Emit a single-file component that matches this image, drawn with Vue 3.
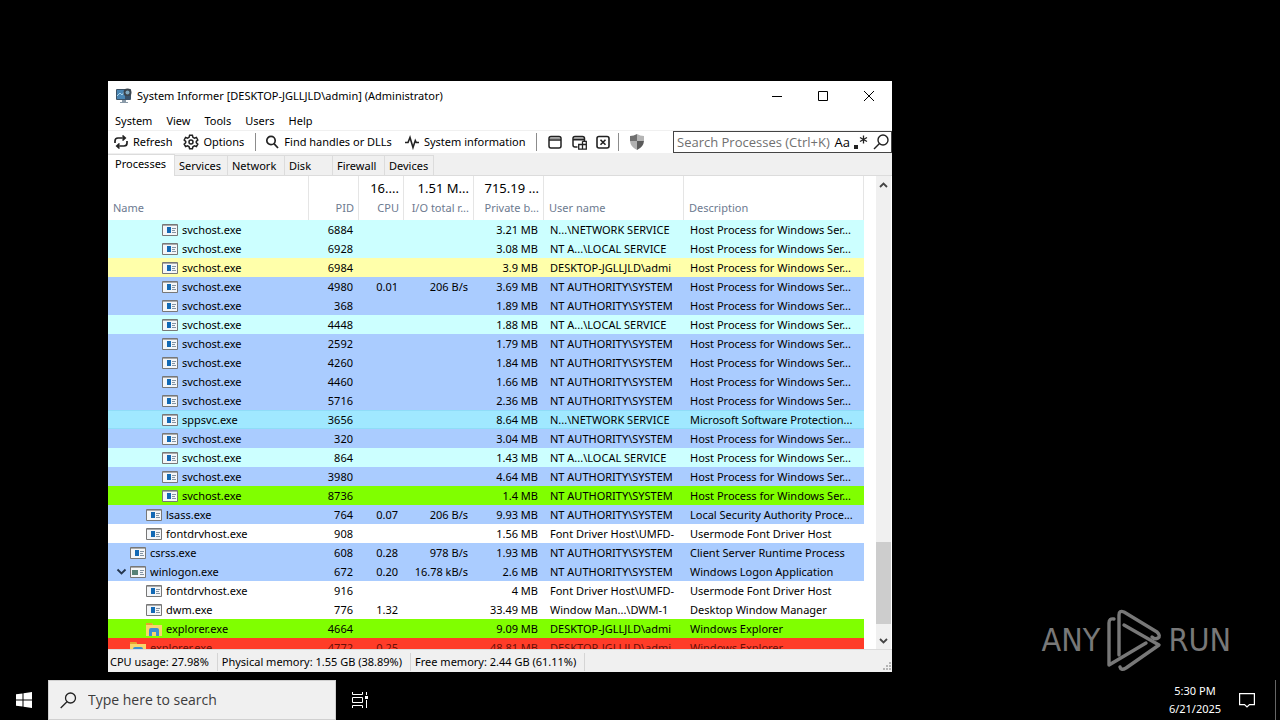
<script setup>
import { ref } from 'vue'

const menus = ['System', 'View', 'Tools', 'Users', 'Help']
const tabs = [
  { name: 'Processes', width: 67 },
  { name: 'Services', width: 53 },
  { name: 'Network', width: 57 },
  { name: 'Disk', width: 48 },
  { name: 'Firewall', width: 52 },
  { name: 'Devices', width: 49 }
]
const activeTab = ref('Processes')
const filter = ref('')
const taskSearch = ref('')

const columns = [
  { key: 'name', label: 'Name', total: '' },
  { key: 'pid', label: 'PID', total: '' },
  { key: 'cpu', label: 'CPU', total: '16....' },
  { key: 'io', label: 'I/O total r...', total: '1.51 M...' },
  { key: 'bytes', label: 'Private b...', total: '715.19 ...' },
  { key: 'user', label: 'User name', total: '' },
  { key: 'desc', label: 'Description', total: '' }
]

const HOST = 'Host Process for Windows Ser...'
const SYSTEM = 'NT AUTHORITY\\SYSTEM'
const LOCAL = 'NT A...\\LOCAL SERVICE'
const NETWORK = 'N...\\NETWORK SERVICE'
const ADMIN = 'DESKTOP-JGLLJLD\\admi'
const UMFD = 'Font Driver Host\\UMFD-'

const processes = [
  { level: 3, name: 'svchost.exe', pid: 6884, bytes: '3.21 MB', user: NETWORK, desc: HOST, kind: 'service' },
  { level: 3, name: 'svchost.exe', pid: 6928, bytes: '3.08 MB', user: LOCAL, desc: HOST, kind: 'service' },
  { level: 3, name: 'svchost.exe', pid: 6984, bytes: '3.9 MB', user: ADMIN, desc: HOST, kind: 'own' },
  { level: 3, name: 'svchost.exe', pid: 4980, cpu: '0.01', io: '206 B/s', bytes: '3.69 MB', user: SYSTEM, desc: HOST, kind: 'system' },
  { level: 3, name: 'svchost.exe', pid: 368, bytes: '1.89 MB', user: SYSTEM, desc: HOST, kind: 'system' },
  { level: 3, name: 'svchost.exe', pid: 4448, bytes: '1.88 MB', user: LOCAL, desc: HOST, kind: 'service' },
  { level: 3, name: 'svchost.exe', pid: 2592, bytes: '1.79 MB', user: SYSTEM, desc: HOST, kind: 'system' },
  { level: 3, name: 'svchost.exe', pid: 4260, bytes: '1.84 MB', user: SYSTEM, desc: HOST, kind: 'system' },
  { level: 3, name: 'svchost.exe', pid: 4460, bytes: '1.66 MB', user: SYSTEM, desc: HOST, kind: 'system' },
  { level: 3, name: 'svchost.exe', pid: 5716, bytes: '2.36 MB', user: SYSTEM, desc: HOST, kind: 'system' },
  { level: 3, name: 'sppsvc.exe', pid: 3656, bytes: '8.64 MB', user: NETWORK, desc: 'Microsoft Software Protection...', kind: 'hovered' },
  { level: 3, name: 'svchost.exe', pid: 320, bytes: '3.04 MB', user: SYSTEM, desc: HOST, kind: 'system' },
  { level: 3, name: 'svchost.exe', pid: 864, bytes: '1.43 MB', user: LOCAL, desc: HOST, kind: 'service' },
  { level: 3, name: 'svchost.exe', pid: 3980, bytes: '4.64 MB', user: SYSTEM, desc: HOST, kind: 'system' },
  { level: 3, name: 'svchost.exe', pid: 8736, bytes: '1.4 MB', user: SYSTEM, desc: HOST, kind: 'started' },
  { level: 2, name: 'lsass.exe', pid: 764, cpu: '0.07', io: '206 B/s', bytes: '9.93 MB', user: SYSTEM, desc: 'Local Security Authority Proce...', kind: 'system' },
  { level: 2, name: 'fontdrvhost.exe', pid: 908, bytes: '1.56 MB', user: UMFD, desc: 'Usermode Font Driver Host' },
  { level: 1, name: 'csrss.exe', pid: 608, cpu: '0.28', io: '978 B/s', bytes: '1.93 MB', user: SYSTEM, desc: 'Client Server Runtime Process', kind: 'system' },
  { level: 1, name: 'winlogon.exe', pid: 672, cpu: '0.20', io: '16.78 kB/s', bytes: '2.6 MB', user: SYSTEM, desc: 'Windows Logon Application', kind: 'system', icon: 'logon', open: true },
  { level: 2, name: 'fontdrvhost.exe', pid: 916, bytes: '4 MB', user: UMFD, desc: 'Usermode Font Driver Host' },
  { level: 2, name: 'dwm.exe', pid: 776, cpu: '1.32', bytes: '33.49 MB', user: 'Window Man...\\DWM-1', desc: 'Desktop Window Manager' },
  { level: 2, name: 'explorer.exe', pid: 4664, bytes: '9.09 MB', user: ADMIN, desc: 'Windows Explorer', kind: 'started', icon: 'folder' },
  { level: 1, name: 'explorer.exe', pid: 4772, cpu: '0.25', bytes: '48.81 MB', user: ADMIN, desc: 'Windows Explorer', kind: 'ended', icon: 'folder' }
]

const status = ['CPU usage: 27.98%', 'Physical memory: 1.55 GB (38.89%)', 'Free memory: 2.44 GB (61.11%)']
</script>

<template>
  <div class="desktop">
    <main class="workspace">
      <section class="window">
        <header class="titlebar">
          <svg class="app-icon" width="18" height="16" viewBox="0 0 18 16">
            <rect x="1" y="1" width="15" height="11" rx="1" fill="#3c5266" />
            <rect x="2" y="2" width="13" height="9" fill="#4a86b4" />
            <path d="M2 8l3-3 2 2 3-4" stroke="#a9d4ee" fill="none" />
            <circle cx="12.500" cy="4.500" r="4" fill="#3b444d" />
            <circle cx="12.500" cy="4.500" r="2" fill="#7fa7bf" />
            <path d="M7 12h4v2h2v1H5v-1h2z" fill="#8a9aa8" />
            <path d="M10 8h5v4h-5z" fill="#38516a" />
          </svg>
          <h1>System Informer [DESKTOP-JGLLJLD\admin] (Administrator)</h1>
          <button class="caption" aria-label="Minimize">
            <svg width="12" height="12"><path d="M1 6.500h10" stroke="#000" /></svg>
          </button>
          <button class="caption" aria-label="Maximize">
            <svg width="12" height="12"><path d="M1.500 1.500h9v9h-9z" stroke="#000" fill="none" /></svg>
          </button>
          <button class="caption" aria-label="Close">
            <svg width="12" height="12"><path d="M1 1l10 10M11 1L1 11" stroke="#000" /></svg>
          </button>
        </header>

        <nav class="menubar">
          <button v-for="m in menus" :key="m">{{ m }}</button>
        </nav>

        <div class="toolbar">
          <button>
            <svg width="16" height="16" viewBox="0 0 16 16" fill="none" stroke="#222" stroke-width="1.700">
              <path d="M2 9V7q0-3 3-3h7M9.500 1.500L12.200 4 9.500 6.500M14 7v2q0 3-3 3H4M6.500 9.500L3.800 12l2.700 2.500" />
            </svg>
            Refresh
          </button>
          <button class="options">
            <svg width="16" height="16" viewBox="0 0 16 16" fill="none" stroke="#222" stroke-width="1.500">
              <path d="M6.600 1.300h2.800l.5 2 1.500.8 2-.6 1.400 2.500-1.500 1.400v1.300l1.500 1.400-1.400 2.400-2-.6-1.500.9-.5 1.900H6.600l-.5-1.900-1.500-.9-2 .6-1.400-2.400 1.500-1.400V7.400L1.200 6l1.400-2.500 2 .6 1.500-.8z" />
              <circle cx="8" cy="8" r="2" />
            </svg>
            Options
          </button>
          <i class="divider"></i>
          <button class="find">
            <svg width="16" height="16" viewBox="0 0 16 16" fill="none" stroke="#222" stroke-width="1.700">
              <circle cx="7" cy="6.500" r="4.200" /><path d="M10 9.700l4 4.300" />
            </svg>
            Find handles or DLLs
          </button>
          <button class="sysinfo">
            <svg width="16" height="16" viewBox="0 0 16 16" fill="none" stroke="#222" stroke-width="1.600">
              <path d="M1 8.500h3l2-5 3 10 2.300-7 1 2H15" />
            </svg>
            System information
          </button>
          <i class="divider"></i>
          <div class="tools">
            <button class="tool" aria-label="Find window">
              <svg width="16" height="16" viewBox="0 0 16 16" fill="none" stroke="#222" stroke-width="1.500">
                <path d="M3 4.300h10" stroke="#999" /><rect x="2" y="2.500" width="12" height="11.500" rx="2" /><path d="M2 6h12" />
              </svg>
            </button>
            <button class="tool" aria-label="Find window and thread">
              <svg width="16" height="16" viewBox="0 0 16 16" fill="none" stroke="#222" stroke-width="1.500">
                <path d="M3 4.300h10" stroke="#999" />
                <path d="M6.500 13H4q-2 0-2-2V4.500q0-2 2-2h7.500q2 0 2 2v2.500M2 5.800h11.500" />
                <path d="M7.700 10.500h7.600v4.700H7.700zM11.500 7.300h3.800v7.900M11.500 7.300v7.900" stroke-width="1.300" />
              </svg>
            </button>
            <button class="tool" aria-label="Find window and terminate">
              <svg width="16" height="16" viewBox="0 0 16 16" fill="none" stroke="#222" stroke-width="1.600">
                <rect x="2" y="2.500" width="12" height="11.500" rx="2" /><path d="M5.500 5.700l5 5M10.500 5.700l-5 5" />
              </svg>
            </button>
          </div>
          <i class="divider"></i>
          <button class="tool shield" aria-label="Administrator">
            <svg width="16" height="16" viewBox="0 0 16 16">
              <path d="M8 0Q5 2 1 2v5h7z" fill="#6f6f6f" /><path d="M8 0q3 2 7 2v5H8z" fill="#b5b5b5" />
              <path d="M1 7q.5 6 7 9V7z" fill="#b0b0b0" /><path d="M15 7q-.5 6-7 9V7z" fill="#5a5a5a" />
            </svg>
          </button>
          <label class="search">
            <input v-model="filter" type="text" placeholder="Search Processes (Ctrl+K)" aria-label="Search Processes" />
            <span class="match-case">Aa</span>
            <svg width="14" height="16" viewBox="0 0 14 16">
              <path d="M0 11h4v4H0z" fill="#222" />
              <path d="M9.500 1.500v8M6 3.500l7 4M13 3.500l-7 4" stroke="#222" stroke-width="1.300" />
            </svg>
            <svg width="18" height="18" viewBox="0 0 18 18" fill="none" stroke="#222" stroke-width="1.400">
              <circle cx="11" cy="7" r="5" /><path d="M7.500 10.500L2 16" />
            </svg>
          </label>
        </div>

        <div class="tabs" role="tablist">
          <button v-for="t in tabs" :key="t.name" role="tab" :class="{ active: t.name === activeTab }"
            :style="{ width: t.width + 'px' }" @click="activeTab = t.name">{{ t.name }}</button>
        </div>

        <div class="content">
          <div class="list">
            <table>
              <colgroup>
                <col v-for="c in columns" :key="c.key" :class="'col-' + c.key" />
              </colgroup>
              <thead>
                <tr>
                  <th v-for="c in columns" :key="c.key" :class="c.key">
                    <span class="total">{{ c.total }}</span>
                    <span class="label">{{ c.label }}</span>
                  </th>
                </tr>
              </thead>
              <tbody>
                <tr v-for="p in processes" :key="p.pid" :class="p.kind">
                  <td class="name">
                    <div class="tree" :class="'level-' + p.level">
                      <svg class="expander" width="16" height="16" viewBox="0 0 16 16">
                        <path v-if="p.open" d="M3.500 5.500l4 4 4-4" fill="none" stroke="#24364d" stroke-width="1.800" />
                      </svg>
                      <svg v-if="p.icon === 'folder'" width="16" height="16" viewBox="0 0 16 16">
                        <path d="M0 2h6l1 2h9v11H0z" fill="#f8d66c" /><path d="M0 2h6l1 2H0z" fill="#e5a52c" />
                        <path d="M3 15V9q0-2 2-2h6q2 0 2 2v6h-3v-4H6v4z" fill="#3d8fd1" />
                      </svg>
                      <svg v-else width="16" height="16" viewBox="0 0 16 16">
                        <path d="M.5 2.500h15v11H.5z" fill="#f4f6f8" stroke="#777" />
                        <path d="M1 3h14v1H1z" fill="#aaa" />
                        <path v-if="p.icon === 'logon'" d="M2 6h6v5H2z" fill="#568277" />
                        <path v-else d="M5 5h4v6H5z" fill="#1269b5" />
                        <path d="M10 6.500h4M10 8.500h3M10 10.500h4" stroke="#8293a3" />
                      </svg>
                      <span>{{ p.name }}</span>
                    </div>
                  </td>
                  <td class="pid">{{ p.pid }}</td>
                  <td class="cpu">{{ p.cpu }}</td>
                  <td class="io">{{ p.io }}</td>
                  <td class="bytes">{{ p.bytes }}</td>
                  <td class="user">{{ p.user }}</td>
                  <td class="desc">{{ p.desc }}</td>
                </tr>
              </tbody>
            </table>
          </div>
          <div class="scrollbar">
            <button aria-label="Scroll up">
              <svg width="9" height="6"><path d="M1 5l3.500-3.500L8 5" fill="none" stroke="#444" stroke-width="1.800" /></svg>
            </button>
            <div class="track"><div class="thumb"></div></div>
            <button aria-label="Scroll down">
              <svg width="9" height="6"><path d="M1 1l3.500 3.500L8 1" fill="none" stroke="#444" stroke-width="1.800" /></svg>
            </button>
          </div>
        </div>

        <footer class="statusbar">
          <span v-for="s in status" :key="s">{{ s }}</span>
          <svg width="10" height="10" fill="#b5b5b5">
            <path d="M7 0h2v2H7zM4 3h2v2H4zM7 3h2v2H7zM1 6h2v2H1zM4 6h2v2H4zM7 6h2v2H7z" />
          </svg>
        </footer>
      </section>

      <div class="watermark">
        <span>ANY</span>
        <svg width="56" height="64" viewBox="0 0 56 64" fill="none" stroke="#787878" stroke-width="3.400" stroke-linejoin="round" stroke-linecap="round">
          <path d="M8 11q-5-1-5 4v42L40 35" />
          <path d="M13 47V7q0-5 5-3l33 20q4 4 1 6-3 2-6-1" />
          <path d="M18 17l35 20-33 23q-5 3-6-1" />
        </svg>
        <span>RUN</span>
      </div>
    </main>

    <footer class="taskbar">
      <button class="start" aria-label="Start">
        <svg width="16" height="16" viewBox="0 0 16 16" fill="#fff">
          <path d="M0 2.300L6.500 1.400v6.100H0zM7.500 1.200L16 0v7.500H7.500zM0 8.500h6.500v6.100L0 13.700zM7.500 8.500H16V16l-8.500-1.200z" />
        </svg>
      </button>
      <label class="task-search">
        <svg width="17" height="17" viewBox="0 0 17 17" fill="none" stroke="#222" stroke-width="1.300">
          <circle cx="10.500" cy="6" r="5" /><path d="M7 9.700L.7 16" />
        </svg>
        <input v-model="taskSearch" type="text" placeholder="Type here to search" aria-label="Type here to search" />
      </label>
      <button class="task-view" aria-label="Task View">
        <svg width="16" height="16" fill="none" stroke="#fff">
          <path d="M.5 0v2.500h10V0M.5 5.500h10v5H.5zM.5 16v-2.500h10V16M14.500 0v3M14.500 8v8" /><path d="M13 4h3v3h-3z" fill="#fff" stroke="none" />
        </svg>
      </button>
      <div class="clock">
        <time>5:30 PM</time>
        <time>6/21/2025</time>
      </div>
      <button class="notifications" aria-label="Notifications">
        <svg width="16" height="16" fill="none" stroke="#fff" stroke-width="1.200">
          <path d="M.6 1.600h14.800v11H10.500L8 15l-2.500-2.400H.6z" />
        </svg>
      </button>
      <button class="show-desktop" aria-label="Show desktop"></button>
    </footer>
  </div>
</template>

<style>
body {
  margin: 0;
  background: #000;
}
</style>

<style scoped>
.desktop {
  display: flex;
  flex-direction: column;
  min-height: 100vh;
  background: #000;
  font-family: "Noto Sans", "Open Sans", sans-serif;
  font-size: 11px;
  line-height: 18px;
  color: #000;
}

button,
input {
  margin: 0;
  padding: 0;
  border: 0;
  background: none;
  font: inherit;
  color: inherit;
  white-space: nowrap;
}

svg {
  flex: none;
}

.workspace {
  position: relative;
  flex: 1;
}

.window {
  position: absolute;
  top: 81px;
  left: 108px;
  display: flex;
  flex-direction: column;
  box-sizing: border-box;
  width: 784px;
  height: 591px;
  background: #fff;
  overflow: hidden;
}

.titlebar {
  display: flex;
  align-items: center;
  height: 30px;
  padding-left: 7px;
}

.titlebar h1 {
  flex: 1;
  margin: 0 0 0 4px;
  font-size: 11px;
  font-weight: 400;
}

.caption {
  display: flex;
  align-items: center;
  justify-content: center;
  width: 46px;
  height: 28px;
}

.menubar {
  display: flex;
  align-items: center;
  gap: 14px;
  box-sizing: border-box;
  height: 20px;
  padding-left: 7px;
  border-bottom: 1px solid #f0f0f0;
}

.toolbar {
  display: flex;
  align-items: center;
  height: 22px;
  padding-left: 5px;
}

.toolbar button {
  display: flex;
  align-items: center;
  gap: 4px;
}

.toolbar .options {
  margin-left: 11px;
}

.toolbar .sysinfo {
  margin-left: 12px;
}

.divider {
  width: 1px;
  height: 18px;
  margin: 0 8px 0 11px;
  background: #8c8c8c;
}

.tools {
  display: flex;
  margin: 0 -8px 0 -2px;
}

.toolbar .tool {
  justify-content: center;
  width: 24px;
}

.toolbar .shield {
  margin-left: -2px;
}

.search {
  display: flex;
  align-items: center;
  gap: 4px;
  box-sizing: border-box;
  width: 219px;
  height: 22px;
  margin-left: auto;
  padding: 0 1px 0 3px;
  border: 1px solid #444;
  font-family: "Open Sans", "Noto Sans", sans-serif;
  font-size: 13px;
}

.search input {
  flex: 1;
  min-width: 0;
  outline: none;
}

.search input::placeholder {
  color: #707070;
  opacity: 1;
}

.tabs {
  display: flex;
  align-items: flex-end;
  height: 22px;
  background: #f0f0f0;
  border-bottom: 1px solid #dcdcdc;
}

.tabs button {
  box-sizing: border-box;
  height: 20px;
  padding-left: 4px;
  border-top: 1px solid #dcdcdc;
  border-right: 1px solid #dcdcdc;
  text-align: left;
}

.tabs button.active {
  height: 22px;
  padding: 0 0 3px 7px;
  margin-bottom: -1px;
  background: #fff;
}

.content {
  display: flex;
  flex: 1;
  min-height: 0;
}

.list {
  flex: 1;
  overflow: hidden;
}

table {
  width: 756px;
  table-layout: fixed;
  border-collapse: collapse;
}

.col-name { width: 201px; }
.col-pid { width: 50px; }
.col-cpu { width: 45px; }
.col-io,
.col-bytes { width: 70px; }
.col-user { width: 140px; }
.col-desc { width: 180px; }

th {
  height: 44px;
  padding: 0 5px;
  box-sizing: border-box;
  box-shadow: inset -1px 0 #e5e5e5;
  font-weight: 400;
  text-align: left;
  white-space: nowrap;
}

th span {
  display: block;
  height: 20px;
  line-height: 20px;
}

.total {
  font-size: 13px;
}

.label {
  color: #6d7a90;
}

td {
  height: 19px;
  padding: 0 5px 0 6px;
  line-height: 19px;
  white-space: nowrap;
  overflow: hidden;
}

td.name {
  padding: 0;
}

.pid,
.cpu,
.io,
.bytes {
  text-align: right;
}

td.pid,
td.cpu,
td.io,
td.bytes {
  padding: 0 6px 0 0;
}

.service { background: #ccffff; }
.own { background: #ffffaa; }
.system { background: #aaccff; }
.hovered { background: #a0e8ff; }
.started { background: #80ff00; }
.ended { background: #ff3c28; }

.hovered td {
  box-shadow: inset 0 1px #8fdcf8, inset 0 -1px #8fdcf8;
}

.ended td {
  color: #6a1008;
}

.tree {
  display: flex;
  align-items: center;
  height: 19px;
}

.tree span {
  margin-left: 4px;
}

.level-1 { padding-left: 6px; }
.level-2 { padding-left: 22px; }
.level-3 { padding-left: 38px; }

.scrollbar {
  display: flex;
  flex-direction: column;
  width: 15px;
  margin-right: 1px;
  background: #f0f0f0;
}

.scrollbar button {
  display: flex;
  align-items: center;
  justify-content: center;
  height: 17px;
}

.track {
  display: flex;
  flex: 1;
  flex-direction: column;
  justify-content: flex-end;
  padding-bottom: 8px;
}

.thumb {
  height: 82px;
  background: #cdcdcd;
}

.statusbar {
  display: flex;
  align-items: center;
  height: 21px;
  padding-top: 1px;
  background: #f0f0f0;
  border-top: 1px solid #dcdcdc;
}

.statusbar span {
  padding: 0 8px 0 2px;
  margin-right: 2px;
  border-right: 1px solid #d5d5d5;
}

.statusbar svg {
  align-self: flex-end;
  margin-left: auto;
}

.watermark {
  position: absolute;
  right: 49px;
  bottom: 8px;
  display: flex;
  align-items: center;
  gap: 6px;
  font-family: "DejaVu Sans Condensed", "Liberation Sans", sans-serif;
  font-size: 32px;
  line-height: 64px;
  color: #787878;
}

.taskbar {
  display: flex;
  height: 40px;
  color: #fff;
}

.taskbar button {
  display: flex;
  align-items: center;
  justify-content: center;
  width: 48px;
}

.task-search {
  display: flex;
  align-items: center;
  gap: 11px;
  box-sizing: border-box;
  width: 288px;
  padding: 0 11px;
  background: #f0f0f0;
  border: 1px solid #d0d0d0;
}

.task-search input {
  flex: 1;
  min-width: 0;
  font-family: "Open Sans", "Noto Sans", sans-serif;
  font-size: 14px;
  color: #222;
  outline: none;
}

.task-search input::placeholder {
  color: #3c3c3c;
  opacity: 1;
}

.clock {
  display: flex;
  flex-direction: column;
  align-items: center;
  justify-content: center;
  width: 66px;
  margin-left: auto;
}

.taskbar .notifications {
  width: 38px;
  margin-right: 9px;
}

.taskbar .show-desktop {
  width: 5px;
  border-left: 1px solid #666;
}
</style>
